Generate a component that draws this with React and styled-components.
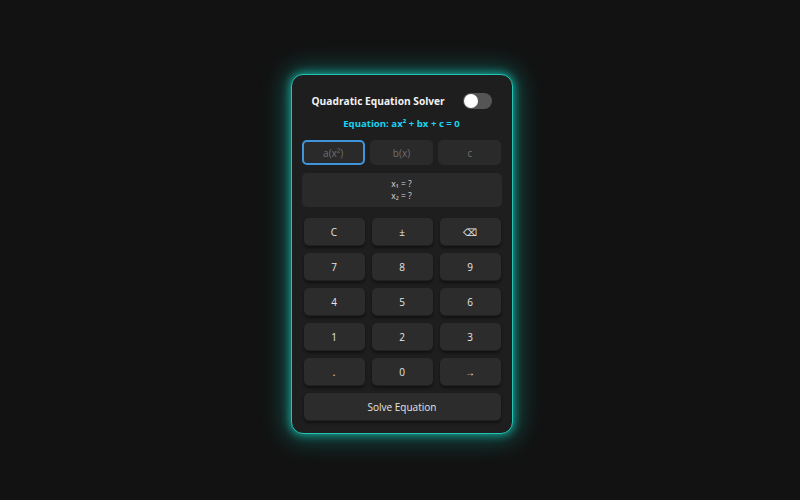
import React, { useState } from 'react'
import styled, { createGlobalStyle } from 'styled-components'

const GlobalStyle = createGlobalStyle`
    html, body {
        margin: 0;
        padding: 0;
        background: #121212;
        font-family: "Open Sans", "Liberation Sans", sans-serif;
    }
`;

const Page = styled('div')`
    width: 800px;
    height: 500px;
    display: flex;
    justify-content: center;
    align-items: flex-start;
    padding-top: 74px;
    padding-left: 3px;
    box-sizing: border-box;
`;

const Card = styled('div')`
    width: 222px;
    box-sizing: border-box;
    padding: 17px 10px 12px;
    background: #1e1e1e;
    border: 1px solid #22c4b4;
    border-radius: 12px;
    box-shadow: 0 0 8px 1px rgba(25, 205, 190, 0.7), 0 0 24px 6px rgba(20, 180, 165, 0.4);
    display: flex;
    flex-direction: column;
`;

const Header = styled('div')`
    display: flex;
    justify-content: space-between;
    align-items: center;
    padding: 0 10px 0 10px;
    height: 17px;
`;

const Title = styled('h1')`
    margin: 0;
    font-size: 10.2px;
    font-weight: 700;
    color: #f2f2f2;
`;

const Toggle = styled('div')`
    width: 29px;
    height: 16px;
    border-radius: 8px;
    background: #555;
    position: relative;
    &::after {
        content: '';
        position: absolute;
        top: 1px;
        left: 1px;
        width: 14px;
        height: 14px;
        border-radius: 50%;
        background: #fff;
    }
`;

const Equation = styled('div')`
    margin-top: 8px;
    text-align: center;
    font-size: 9.6px;
    font-weight: 700;
    color: #1ad3f0;
`;

const Inputs = styled('div')`
    margin-top: 10px;
    display: grid;
    grid-template-columns: repeat(3, 1fr);
    gap: 5px;
`;

const Field = styled('div')`
    height: 25px;
    box-sizing: border-box;
    border-radius: 5px;
    background: #2a2a2a;
    border: 2px solid ${({ active }) => (active ? '#3f94dc' : '#2a2a2a')};
    display: flex;
    align-items: center;
    justify-content: center;
    color: #6f6f6f;
    font-size: 10px;
`;

const Result = styled('div')`
    margin-top: 8px;
    height: 34px;
    border-radius: 5px;
    background: #2a2a2a;
    display: flex;
    flex-direction: column;
    align-items: center;
    justify-content: center;
    color: #ddd;
    font-size: 8.5px;
    line-height: 12px;
    span {
        display: block;
        height: 12px;
    }
`;

const Keypad = styled('div')`
    margin: 11px 0 0 2px;
    display: grid;
    grid-template-columns: repeat(3, 61px);
    grid-auto-rows: 28px;
    gap: 7px;
`;

const Key = styled('button')`
    grid-column: ${({ wide }) => (wide ? '1 / -1' : 'auto')};
    border: none;
    border-radius: 5px;
    background: #2c2c2c;
    box-shadow: 0 2px 3px rgba(0, 0, 0, 0.45), inset 0 -1px 0 rgba(0, 0, 0, 0.25);
    color: #e6e6e6;
    font-family: inherit;
    font-size: 10px;
    display: flex;
    align-items: center;
    justify-content: center;
    padding: 0;
`;

const keys = ['C', '±', '⌫', '7', '8', '9', '4', '5', '6', '1', '2', '3', '.', '0', '→']

function App() {
    const [active] = useState('a')

    return (
        <Page>
            <GlobalStyle />
            <Card>
                <Header>
                    <Title>Quadratic Equation Solver</Title>
                    <Toggle />
                </Header>
                <Equation>Equation: ax² + bx + c = 0</Equation>
                <Inputs>
                    <Field active={active === 'a'}>a(x²)</Field>
                    <Field>b(x)</Field>
                    <Field>c</Field>
                </Inputs>
                <Result>
                    <span>x₁ = ?</span>
                    <span>x₂ = ?</span>
                </Result>
                <Keypad>
                    {keys.map((k) => <Key key={k}>{k}</Key>)}
                    <Key wide>Solve Equation</Key>
                </Keypad>
            </Card>
        </Page>
    )
}

export default App
